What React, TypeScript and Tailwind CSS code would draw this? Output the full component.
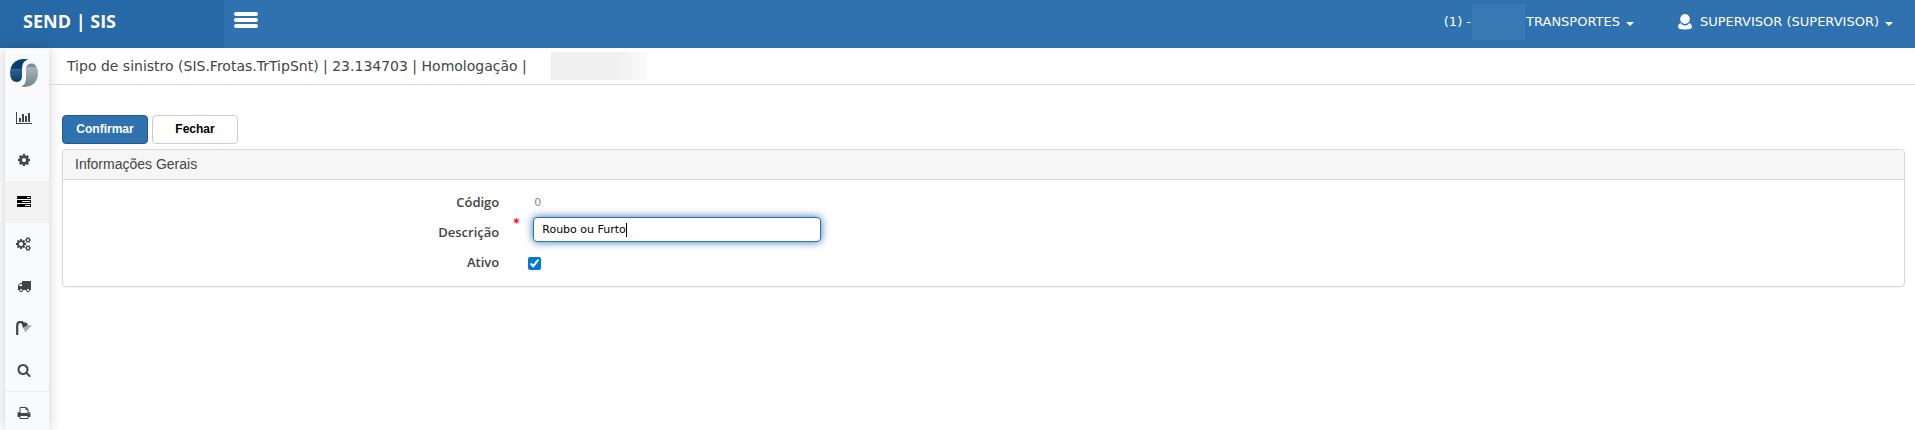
import { useState } from "react";
import type { ReactNode } from "react";

interface GlyphProps {
  d: string;
  wide?: boolean;
}

function Glyph({ d, wide }: GlyphProps) {
  return (
    <svg
      viewBox={wide ? "0 0 2048 1792" : "0 0 1792 1792"}
      className={wide ? "h-3.5 w-4" : "h-3.5 w-3.5"}
      fill="currentColor"
      aria-hidden
    >
      <path d={d} />
    </svg>
  );
}

const CHART =
  "M640 896v512h-256v-512h256zm384-512v1024h-256v-1024h256zm1024 1152v128h-2048v-1536h128v1408h1920zm-640-896v768h-256v-768h256zm384-384v1152h-256v-1152h256z";
const COG =
  "M1152 896q0-106-75-181t-181-75-181 75-75 181 75 181 181 75 181-75 75-181zm512-109v222q0 12-8 23t-20 13l-185 28q-19 54-39 91 35 50 107 138 10 12 10 25t-9 23q-27 37-99 108t-94 71q-12 0-26-9l-138-108q-44 23-91 38-16 136-29 186-7 28-36 28h-222q-14 0-24.5-8.5t-11.5-21.5l-28-184q-49-16-90-37l-141 107q-10 9-25 9-14 0-25-11-126-114-165-168-7-10-7-23 0-12 8-23 15-21 51-66.5t54-70.5q-27-50-41-99l-183-27q-13-2-21-12.5t-8-23.5v-222q0-12 8-23t19-13l186-28q14-46 39-92-40-57-107-138-10-12-10-24 0-10 9-23 26-36 98.5-107.5t94.5-71.5q13 0 26 10l138 107q44-23 91-38 16-136 29-186 7-28 36-28h222q14 0 24.5 8.5t11.5 21.5l28 184q49 16 90 37l142-107q9-9 24-9 13 0 25 10 129 119 165 170 7 8 7 22 0 12-8 23-15 21-51 66.5t-54 70.5q26 50 41 98l183 28q13 2 21 12.5t8 23.5z";
const COGS =
  "M896 896q0-106-75-181t-181-75-181 75-75 181 75 181 181 75 181-75 75-181zm768 512q0-52-38-90t-90-38-90 38-38 90q0 53 37.5 90.5t90.5 37.5 90.5-37.5 37.5-90.5zm0-1024q0-52-38-90t-90-38-90 38-38 90q0 53 37.5 90.5t90.5 37.5 90.5-37.5 37.5-90.5zm-384 421v185q0 10-7 19.5t-16 10.5l-155 24q-11 35-32 76 34 48 90 115 7 11 7 20 0 12-7 19-23 30-82.5 89.5t-78.5 59.5q-11 0-21-7l-115-90q-37 19-77 31-11 108-23 155-7 24-30 24h-186q-11 0-20-7.5t-10-17.5l-23-153q-34-10-75-31l-118 89q-7 7-20 7-11 0-21-8-144-133-144-160 0-9 7-19 10-14 41-53t47-61q-23-44-35-82l-152-24q-10-1-17-9.5t-7-19.5v-185q0-10 7-19.5t16-10.5l155-24q11-35 32-76-34-48-90-115-7-11-7-20 0-12 7-20 22-30 82-89t79-59q11 0 21 7l115 90q34-18 77-32 11-108 23-154 7-24 30-24h186q11 0 20 7.5t10 17.5l23 153q34 10 75 31l118-89q8-7 20-7 11 0 21 8 144 133 144 160 0 8-7 19-12 16-42 54t-45 60q23 48 34 82l152 23q10 2 17 10.5t7 19.5zm640 533v140q0 16-149 31-12 27-30 52 51 113 51 138 0 4-4 7-122 71-124 71-8 0-46-47t-52-68q-20 2-30 2t-30-2q-14 21-52 68t-46 47q-2 0-124-71-4-3-4-7 0-25 51-138-18-25-30-52-149-15-149-31v-140q0-16 149-31 13-29 30-52-51-113-51-138 0-4 4-7 4-2 35-20t59-34 30-16q8 0 46 46.5t52 67.5q20-2 30-2t30 2q51-71 92-112l6-2q4 0 124 70 4 3 4 7 0 25-51 138 17 23 30 52 149 15 149 31zm0-1024v140q0 16-149 31-12 27-30 52 51 113 51 138 0 4-4 7-122 71-124 71-8 0-46-47t-52-68q-20 2-30 2t-30-2q-14 21-52 68t-46 47q-2 0-124-71-4-3-4-7 0-25 51-138-18-25-30-52-149-15-149-31v-140q0-16 149-31 13-29 30-52-51-113-51-138 0-4 4-7 4-2 35-20t59-34 30-16q8 0 46 46.5t52 67.5q20-2 30-2t30 2q51-71 92-112l6-2q4 0 124 70 4 3 4 7 0 25-51 138 17 23 30 52 149 15 149 31z";
const TASKS =
  "M1024 1408h640v-128h-640v128zm-384-512h1024v-128h-1024v128zm640-512h384v-128h-384v128zm512 832v256q0 26-19 45t-45 19h-1664q-26 0-45-19t-19-45v-256q0-26 19-45t45-19h1664q26 0 45 19t19 45zm0-512v256q0 26-19 45t-45 19h-1664q-26 0-45-19t-19-45v-256q0-26 19-45t45-19h1664q26 0 45 19t19 45zm0-512v256q0 26-19 45t-45 19h-1664q-26 0-45-19t-19-45v-256q0-26 19-45t45-19h1664q26 0 45 19t19 45z";
const TRUCK =
  "M640 1408q0-52-38-90t-90-38-90 38-38 90 38 90 90 38 90-38 38-90zm-384-512h384v-256h-158q-13 0-22 9l-195 195q-9 9-9 22v30zm1280 512q0-52-38-90t-90-38-90 38-38 90 38 90 90 38 90-38 38-90zm256-1088v1024q0 15-4 26.5t-13.5 18.5-16.5 11.5-23.5 6-22.5 2-25.5 0-22.5-.5q0 106-75 181t-181 75-181-75-75-181h-384q0 106-75 181t-181 75-181-75-75-181h-64q-3 0-22.5.5t-25.5 0-22.5-2-23.5-6-16.5-11.5-13.5-18.5-4-26.5q0-26 19-45t45-19v-320q0-8-.5-35t0-38 2.5-34.5 6.5-37 14-30.5 22.5-30l198-198q19-19 50.5-32t58.5-13h160v-192q0-26 19-45t45-19h1024q26 0 45 19t19 45z";
const SEARCH =
  "M1216 832q0-185-131.5-316.5t-316.5-131.5-316.5 131.5-131.5 316.5 131.5 316.5 316.5 131.5 316.5-131.5 131.5-316.5zm512 832q0 52-38 90t-90 38q-54 0-90-38l-343-342q-179 124-399 124-143 0-273.5-55.5t-225-150-150-225-55.5-273.5 55.5-273.5 150-225 225-150 273.5-55.5 273.5 55.5 225 150 150 225 55.5 273.5q0 220-124 399l343 343q37 37 37 90z";
const PRINT =
  "M448 1536h896v-256h-896v256zm0-640h896v-384h-160q-40 0-68-28t-28-68v-160h-640v640zm1152 64q0-26-19-45t-45-19-45 19-19 45 19 45 45 19 45-19 19-45zm128 0v416q0 13-9.5 22.5t-22.5 9.5h-224v160q0 40-28 68t-68 28h-960q-40 0-68-28t-28-68v-160h-224q-13 0-22.5-9.5t-9.5-22.5v-416q0-79 56.5-135.5t135.5-56.5h64v-544q0-40 28-68t68-28h672q40 0 88 20t76 48l152 152q28 28 48 76t20 88v256h64q79 0 135.5 56.5t56.5 135.5z";

function Lamp() {
  return (
    <svg viewBox="0 0 16 14" className="h-3.5 w-4" aria-hidden>
      <path d="M1.2 14V4.5Q1.2 1.2 4 1.2h3" fill="none" stroke="#444" strokeWidth="2.2" />
      <path d="M5 .2l6.500 2v2.300L7 7z" fill="#444" />
      <path d="M7 7l5-2.800h4L9 11.500l-.5-2.500z" fill="#a6a8aa" />
    </svg>
  );
}

function Logo() {
  return (
    <svg viewBox="0 0 28 28" className="h-7 w-7" aria-hidden>
      <defs>
        <linearGradient id="logo-blue" x1="0" y1="0" x2="0" y2="1">
          <stop offset="0" stopColor="#0c4477" />
          <stop offset=".4" stopColor="#0a3a6a" />
          <stop offset=".45" stopColor="#2f6292" />
          <stop offset="1" stopColor="#083c6a" />
        </linearGradient>
        <linearGradient id="logo-gray" x1="0" y1="0" x2="0" y2="1">
          <stop offset="0" stopColor="#75889a" />
          <stop offset=".14" stopColor="#7f909d" />
          <stop offset=".18" stopColor="#a9b4bb" />
          <stop offset="1" stopColor="#72848f" />
        </linearGradient>
      </defs>
      <path
        d="M18.500 .4Q12.500 1.500 12 8.500V18Q11.500 22.500 7 23 3.500 23 2 21 0 18 0 13.500 .3 6.500 5 2.800 10.500-1.200 18.500 .4z"
        fill="url(#logo-blue)"
      />
      <path
        d="M18 5.500Q20.500 4 24 4.800 28 8.500 28 14.500 27.800 21 23.500 25 18.500 29 11 27.600 16 25.500 16 19.500V9.500Q16 7 18 5.500z"
        fill="url(#logo-gray)"
      />
    </svg>
  );
}

function Caret() {
  return (
    <span
      className="ml-1.5 mt-1 inline-block border-x-4 border-t-4 border-x-transparent border-t-white"
      aria-hidden
    />
  );
}

interface SideLink {
  name: string;
  icon: ReactNode;
  active?: boolean;
  divided?: boolean;
}

const links: SideLink[] = [
  { name: "Indicadores", icon: <Glyph d={CHART} wide /> },
  { name: "Configurações", icon: <Glyph d={COG} /> },
  { name: "Cadastros", icon: <Glyph d={TASKS} />, active: true },
  { name: "Processos", icon: <Glyph d={COGS} wide /> },
  { name: "Frotas", icon: <Glyph d={TRUCK} /> },
  { name: "Iluminação", icon: <Lamp /> },
  { name: "Consultas", icon: <Glyph d={SEARCH} /> },
  { name: "Relatórios", icon: <Glyph d={PRINT} />, divided: true },
];

const labelStyle =
  "w-1/4 shrink-0 pr-6 text-right font-['Open_Sans',sans-serif] text-[13px] font-semibold text-[#444]";

const initialDescription = "Roubo ou Furto";

export default function App() {
  const [description, setDescription] = useState(initialDescription);
  const [active, setActive] = useState(true);

  return (
    <div className="flex h-screen flex-col overflow-hidden bg-white font-['DejaVu_Sans',sans-serif] text-[#444]">
      <header className="flex h-12 shrink-0 bg-[#3072af] text-white">
        <div className="flex w-56 items-center bg-[#2769a6] pb-1.5 pl-[23px]">
          <a href="#" className="font-['Open_Sans',sans-serif] text-lg font-bold">
            SEND | SIS
          </a>
        </div>
        <button type="button" aria-label="Menu" className="ml-2.5 flex flex-col gap-0.5 self-start pt-3">
          <span className="h-1 w-6 rounded-xs bg-white" />
          <span className="h-1 w-6 rounded-xs bg-white" />
          <span className="h-1 w-6 rounded-xs bg-white" />
        </button>
        <div className="ml-auto flex items-center gap-11 pb-1 pr-[22px] text-[13px]">
          <button type="button" className="flex items-center">
            (1) -
            <span className="mx-px h-9 w-[53px] bg-[#3a78b3]" />
            TRANSPORTES
            <Caret />
          </button>
          <button type="button" className="flex items-center">
            <svg viewBox="0 0 14 16" className="mr-2 h-4 w-3.5" fill="currentColor" aria-hidden>
              <ellipse cx="7" cy="5" rx="4.800" ry="5" />
              <path d="M2.500 9Q4.500 11.500 7 11.500T11.500 9Q14 10 14 13q0 2.500-7 2.500T0 13q0-3 2.500-4z" />
            </svg>
            SUPERVISOR (SUPERVISOR)
            <Caret />
          </button>
        </div>
      </header>

      <div className="flex min-h-0 grow">
        <nav className="ml-[5px] w-11 shrink-0 bg-[#f8fafc] shadow-[0_0_12px_rgba(0,0,0,0.2)]">
          <a href="#" aria-label="Início" className="flex h-[49px] items-center pl-[5px]">
            <Logo />
          </a>
          {links.map((link) => (
            <a
              key={link.name}
              href="#"
              aria-label={link.name}
              className={`flex h-[42px] items-center justify-center pr-1.5 ${
                link.active ? "bg-[#f3f3f3] text-black" : "text-[#444]"
              } ${link.divided ? "border-t border-[#eee]" : ""}`}
            >
              {link.icon}
            </a>
          ))}
        </nav>

        <main className="min-w-0 grow">
          <div className="flex h-[37px] items-center border-b border-[#d9d9d9] pl-[18px]">
            <h1 className="text-sm">
              Tipo de sinistro (SIS.Frotas.TrTipSnt) | 23.134703 | Homologação |
            </h1>
            <span className="ml-6 h-7 w-24 bg-linear-to-r from-[#f0f0f0] from-70% to-[#fbfbfb]" />
          </div>

          <form
            className="pl-[13px] pr-2.5 pt-[30px]"
            onSubmit={(e) => e.preventDefault()}
          >
            <div className="mb-[5px] flex gap-1 font-['Liberation_Sans',sans-serif] text-xs font-bold">
              <button
                type="submit"
                className="h-[29px] w-[86px] rounded border border-[#1f5a94] bg-[#3072af] pb-0.5 text-white"
              >
                Confirmar
              </button>
              <button
                type="button"
                className="h-[29px] w-[86px] rounded border border-[#ccc] bg-white pb-0.5 text-black"
              >
                Fechar
              </button>
            </div>

            <section className="rounded border border-[#d9d9d9] shadow-xs">
              <h2 className="h-[30px] rounded-t border-b border-[#d9d9d9] bg-[#f6f6f6] pl-3 font-['Liberation_Sans',sans-serif] text-sm leading-7">
                Informações Gerais
              </h2>
              <div className="py-2">
                <div className="flex h-[30px] items-center">
                  <label htmlFor="codigo" className={labelStyle}>
                    Código
                  </label>
                  <output id="codigo" className="pl-[11px] text-[11px] text-[#888]">
                    0
                  </output>
                </div>
                <div className="flex h-[30px] items-center">
                  <label htmlFor="descricao" className={labelStyle}>
                    Descrição
                  </label>
                  <div className="relative pb-2 pl-2.5">
                    <span className="absolute -left-2.5 -top-0.5 text-xs font-bold leading-4 text-[#f00]">
                      *
                    </span>
                    <input
                      id="descricao"
                      type="text"
                      autoFocus
                      required
                      value={description}
                      onChange={(e) => setDescription(e.target.value)}
                      className="block h-[25px] w-72 rounded border border-[#3072af] bg-white px-2 text-[11px] text-black shadow-[0_0_8px_rgba(48,114,175,1)] outline-none"
                    />
                    {description === initialDescription && (
                      <span
                        className="pointer-events-none absolute left-[103px] top-1.5 h-3.5 w-px bg-black"
                        aria-hidden
                      />
                    )}
                  </div>
                </div>
                <div className="flex h-[30px] items-center">
                  <label htmlFor="ativo" className={labelStyle}>
                    Ativo
                  </label>
                  <input
                    id="ativo"
                    type="checkbox"
                    checked={active}
                    onChange={(e) => setActive(e.target.checked)}
                    className="ml-[5px] h-[13px] w-[13px] accent-[#0078d7]"
                  />
                </div>
              </div>
            </section>
          </form>
        </main>
      </div>
    </div>
  );
}
